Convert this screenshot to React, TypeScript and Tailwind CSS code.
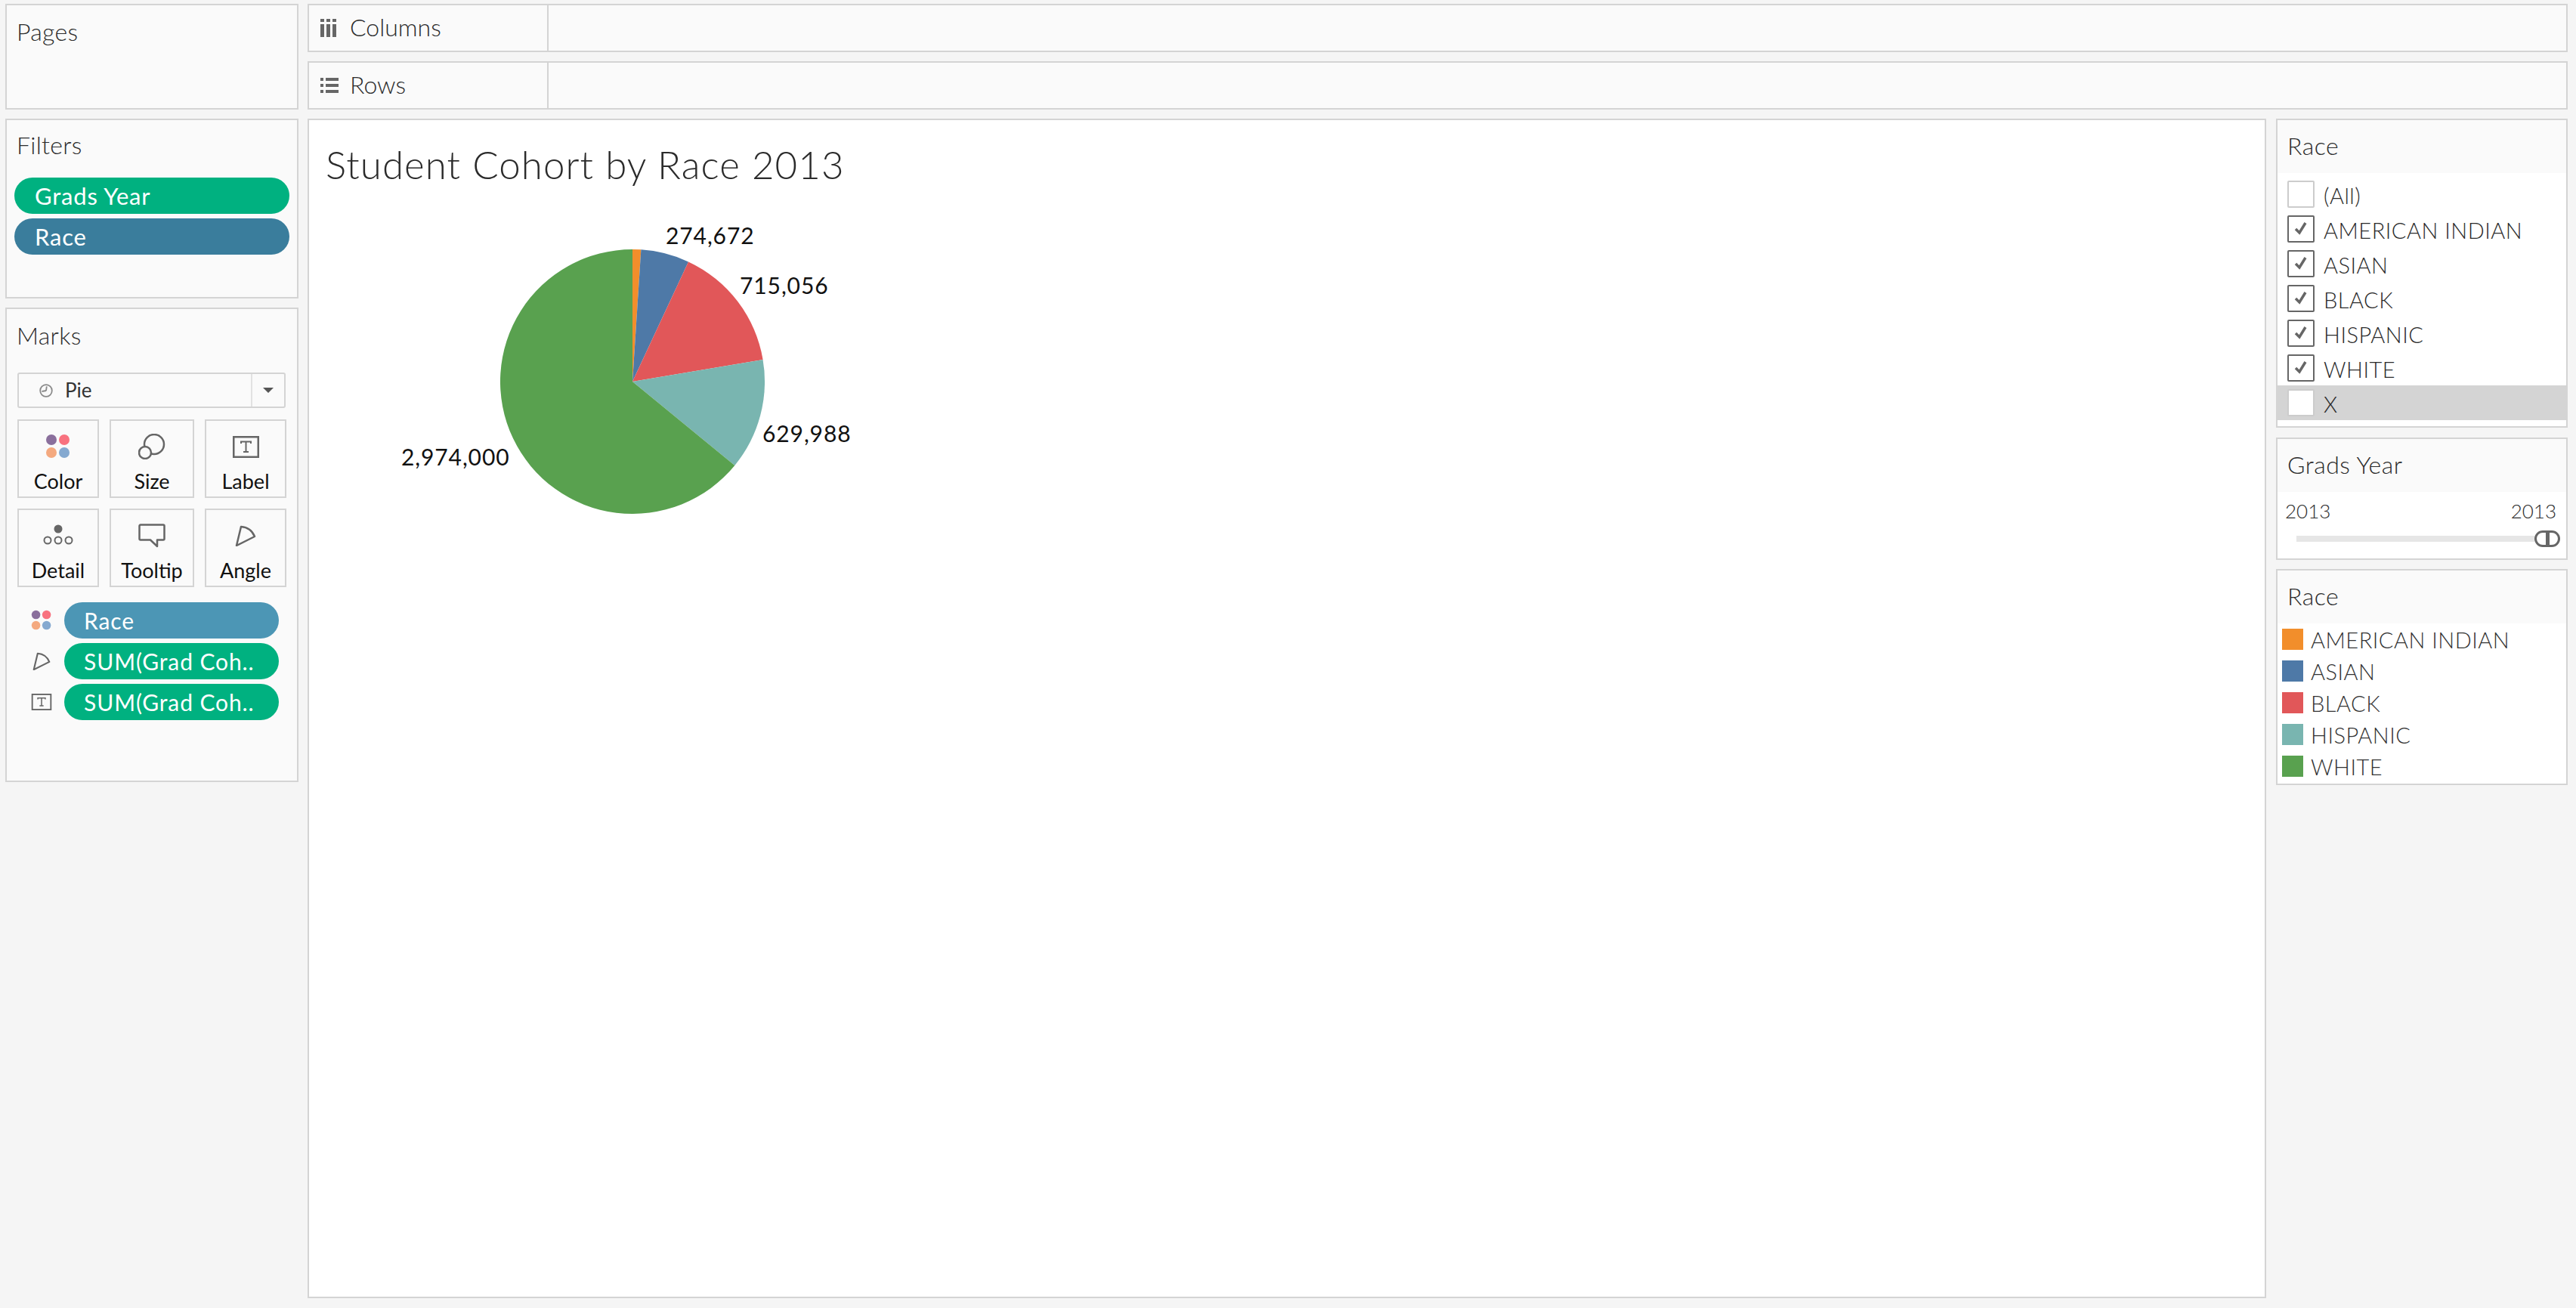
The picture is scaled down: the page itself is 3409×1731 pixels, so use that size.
import React from 'react';

const slices = [
  { name: 'AMERICAN INDIAN', value: 48000, color: '#f28e2b' },
  { name: 'ASIAN', value: 274672, color: '#4e79a7' },
  { name: 'BLACK', value: 715056, color: '#e15759' },
  { name: 'HISPANIC', value: 629988, color: '#79b5b0' },
  { name: 'WHITE', value: 2974000, color: '#59a14f' },
];

const raceOptions = [
  { label: '(All)', checked: false },
  { label: 'AMERICAN INDIAN', checked: true },
  { label: 'ASIAN', checked: true },
  { label: 'BLACK', checked: true },
  { label: 'HISPANIC', checked: true },
  { label: 'WHITE', checked: true },
  { label: 'X', checked: false, hover: true },
];

const pieLabels = [
  { text: '274,672', x: 881, y: 311 },
  { text: '715,056', x: 979, y: 377 },
  { text: '629,988', x: 1009, y: 573 },
  { text: '2,974,000', x: 531, y: 604 },
];

const ColorDots = ({ size = 34 }: { size?: number }) => (
  <svg width={size} height={size} viewBox="0 0 34 34">
    <circle cx="8" cy="8" r="7" fill="#8a6f9c" />
    <circle cx="25" cy="8" r="7" fill="#f8727f" />
    <circle cx="8" cy="25" r="7" fill="#f4a97f" />
    <circle cx="25" cy="25" r="7" fill="#85a9d0" />
  </svg>
);

const SizeIcon = () => (
  <svg width="36" height="34" viewBox="0 0 36 34" fill="none" stroke="#666" strokeWidth="2.5">
    <circle cx="21" cy="14" r="13" />
    <circle cx="9" cy="25" r="8" fill="#fafafa" />
  </svg>
);

const LabelIcon = ({ w = 35, h = 29 }: { w?: number; h?: number }) => (
  <svg width={w} height={h} viewBox="0 0 35 29" fill="none" stroke="#666">
    <rect x="1.25" y="1.25" width="32.5" height="26.5" strokeWidth="2.5" />
    <path d="M11 10V7.5H24V10M17.5 7.5V21M14 21H21" strokeWidth="2" />
  </svg>
);

const DetailIcon = () => (
  <svg width="40" height="32" viewBox="0 0 40 32" fill="none" stroke="#666" strokeWidth="2">
    <circle cx="20" cy="7" r="5.5" fill="#666" stroke="none" />
    <circle cx="6" cy="22" r="4.5" />
    <circle cx="20" cy="22" r="4.5" />
    <circle cx="34" cy="22" r="4.5" />
  </svg>
);

const TooltipIcon = () => (
  <svg width="36" height="32" viewBox="0 0 36 32" fill="none" stroke="#666" strokeWidth="2.5" strokeLinejoin="round">
    <path d="M3 1.5H33a1.5 1.5 0 0 1 1.5 1.5V20a1.5 1.5 0 0 1-1.5 1.5H25V30L16 21.5H3A1.5 1.5 0 0 1 1.5 20V3A1.5 1.5 0 0 1 3 1.5Z" />
  </svg>
);

const AngleIcon = ({ size = 28 }: { size?: number }) => (
  <svg width={size} height={size} viewBox="0 0 28 28" fill="none" stroke="#666" strokeWidth="2.5" strokeLinejoin="round">
    <path d="M2 27L8 2Q21 3 26 15Z" />
  </svg>
);

const PieIcon = () => (
  <svg width="18" height="18" viewBox="0 0 18 18" fill="none" stroke="#8a8a8a" strokeWidth="1.8">
    <circle cx="9" cy="9" r="7.8" />
    <path d="M9 9L9.8 3.4M9 9L3.4 10" />
  </svg>
);

const ColumnsIcon = () => (
  <svg width="21" height="24" viewBox="0 0 21 24" fill="#666">
    <rect x="0" y="0" width="5" height="4" />
    <rect x="8" y="0" width="5" height="4" />
    <rect x="16" y="0" width="5" height="4" />
    <rect x="0" y="7" width="5" height="17" />
    <rect x="8" y="7" width="5" height="17" />
    <rect x="16" y="7" width="5" height="17" />
  </svg>
);

const RowsIcon = () => (
  <svg width="24" height="20" viewBox="0 0 24 20" fill="#666">
    <rect x="0" y="0" width="4" height="4" />
    <rect x="7" y="0" width="17" height="4" />
    <rect x="0" y="8" width="4" height="4" />
    <rect x="7" y="8" width="17" height="4" />
    <rect x="0" y="16" width="4" height="4" />
    <rect x="7" y="16" width="17" height="4" />
  </svg>
);

const PieChart = () => {
  const total = slices.reduce((sum, s) => sum + s.value, 0);
  const cx = 837;
  const cy = 505;
  const r = 175;
  let acc = 0;
  return (
    <svg className="ml-[91px] mt-[12px] block" width="680" height="440" viewBox="500 260 680 440">
      {slices.map((s) => {
        const a0 = (acc / total) * Math.PI * 2;
        acc += s.value;
        const a1 = (acc / total) * Math.PI * 2;
        const large = a1 - a0 > Math.PI ? 1 : 0;
        const d = `M${cx} ${cy}L${cx + r * Math.sin(a0)} ${cy - r * Math.cos(a0)}A${r} ${r} 0 ${large} 1 ${cx + r * Math.sin(a1)} ${cy - r * Math.cos(a1)}Z`;
        return <path key={s.name} d={d} fill={s.color} />;
      })}
      {pieLabels.map((l) => (
        <text key={l.text} x={l.x} y={l.y} dominantBaseline="central" fontSize="30" fill="#111" letterSpacing="0.9" className="[font-family:Lato,sans-serif]">
          {l.text}
        </text>
      ))}
    </svg>
  );
};

const MarkButton = ({ label, icon }: { label: string; icon: React.ReactNode }) => (
  <div className="flex h-[104px] flex-col items-center border-2 border-[#d4d4d4]">
    <div className="flex h-[64px] items-center justify-center pt-[4px]">{icon}</div>
    <div className="text-[27px] leading-[32px] text-[#111]">{label}</div>
  </div>
);

const ShelfPill = ({ icon, label, color }: { icon: React.ReactNode; label: string; color: string }) => (
  <div className="flex h-[48px] items-center">
    <div className="flex w-[62px] justify-center pl-[6px]">{icon}</div>
    <div className={`ml-[2px] flex h-[48px] w-[284px] items-center rounded-full pl-[26px] text-[30px] tracking-[0.9px] text-white ${color}`}>{label}</div>
  </div>
);

const Shelf = ({ icon, label }: { icon: React.ReactNode; label: string }) => (
  <div className="flex h-[64px] border-2 border-[#d4d4d4] bg-[#fafafa]">
    <div className="flex w-[317px] items-center border-r-2 border-[#d4d4d4] pb-[2px] pl-[15px] text-[32px] font-light text-[#2b2b2b]">
      <div className="flex w-[39px] items-center pt-[2px]">{icon}</div>
      {label}
    </div>
  </div>
);

const PanelTitle = ({ children, className = 'pt-[15px]' }: { children: React.ReactNode; className?: string }) => (
  <div className={`pl-[13px] text-[32px] leading-[36px] font-light tracking-[0.3px] text-[#2b2b2b] ${className}`}>{children}</div>
);

const CardHeader = ({ children }: { children: React.ReactNode }) => (
  <div className="flex h-[70px] items-center bg-[#fafafa] pb-[2px] pl-[13px] text-[32px] font-light tracking-[0.5px] text-[#2b2b2b]">{children}</div>
);

const Checkbox = ({ checked }: { checked: boolean }) => (
  <div className={`flex h-[36px] w-[36px] items-center justify-center rounded-[2px] border-2 bg-white ${checked ? 'border-[#666]' : 'border-[#ccc]'}`}>
    {checked && (
      <svg width="18" height="18" viewBox="0 0 18 18" fill="none" stroke="#666" strokeWidth="3.5">
        <path d="M2 9L7 14L15 1" />
      </svg>
    )}
  </div>
);

export default function App() {
  return (
    <div className="flex h-[1731px] w-[3409px] gap-[12px] overflow-hidden bg-[#f5f5f5] pl-[7px] pr-[11px] pt-[5px] [font-family:Lato,sans-serif]">
      {/* left cards */}
      <div className="flex w-[388px] shrink-0 flex-col gap-[12px]">
        <div className="h-[140px] border-2 border-[#d4d4d4] bg-[#fafafa]">
          <PanelTitle className="pt-[17px]">Pages</PanelTitle>
        </div>
        <div className="h-[238px] border-2 border-[#d4d4d4] bg-[#fafafa]">
          <PanelTitle>Filters</PanelTitle>
          <div className="mt-[25px] flex flex-col gap-[6px] px-[10px]">
            <div className="flex h-[48px] items-center rounded-full bg-[#00b180] pl-[27px] text-[31px] tracking-[0.8px] text-white">Grads Year</div>
            <div className="flex h-[48px] items-center rounded-full bg-[#3a7d9c] pl-[27px] text-[31px] tracking-[0.8px] text-white">Race</div>
          </div>
        </div>
        <div className="h-[628px] border-2 border-[#d4d4d4] bg-[#fafafa]">
          <PanelTitle className="pt-[17px]">Marks</PanelTitle>
          <div className="ml-[14px] mt-[31px] flex h-[47px] w-[355px] items-center rounded-[3px] border-2 border-[#d4d4d4]">
            <div className="flex w-[309px] items-center border-r-2 border-[#e2e2e2] pl-[27px] text-[26px] leading-[43px] text-[#333]">
              <PieIcon />
              <span className="ml-[16px]">Pie</span>
            </div>
            <div className="flex flex-1 justify-center">
              <div className="h-0 w-0 border-x-[7px] border-t-[7px] border-x-transparent border-t-[#555]" />
            </div>
          </div>
          <div className="ml-[14px] mt-[15px] grid w-[356px] grid-cols-[108px_112px_108px] gap-x-[14px] gap-y-[14px]">
            <MarkButton label="Color" icon={<ColorDots />} />
            <MarkButton label="Size" icon={<SizeIcon />} />
            <MarkButton label="Label" icon={<LabelIcon />} />
            <MarkButton label="Detail" icon={<DetailIcon />} />
            <MarkButton label="Tooltip" icon={<TooltipIcon />} />
            <MarkButton label="Angle" icon={<AngleIcon />} />
          </div>
          <div className="mt-[20px] flex flex-col gap-[6px] pl-[12px]">
            <ShelfPill icon={<ColorDots size={28} />} label="Race" color="bg-[#4c96b5]" />
            <ShelfPill icon={<AngleIcon size={24} />} label="SUM(Grad Coh.." color="bg-[#00b180]" />
            <ShelfPill icon={<LabelIcon w={28} h={22} />} label="SUM(Grad Coh.." color="bg-[#00b180]" />
          </div>
        </div>
      </div>

      {/* shelves + view + right cards */}
      <div className="flex min-w-0 flex-1 flex-col gap-[12px]">
        <Shelf icon={<ColumnsIcon />} label="Columns" />
        <Shelf icon={<RowsIcon />} label="Rows" />
        <div className="flex gap-[13px]">
          <div className="h-[1561px] w-[2592px] shrink-0 border-2 border-[#d4d4d4] bg-white">
            <div className="pl-[22px] pt-[29px] text-[51px] leading-[60px] font-light tracking-[1.1px] text-[#2b2b2b]">Student Cohort by Race 2013</div>
            <PieChart />
          </div>
          <div className="flex min-w-0 flex-1 flex-col gap-[12px]">
            <div className="mb-[1px] h-[409px] border-2 border-[#d4d4d4] bg-white">
              <CardHeader>Race</CardHeader>
              <div className="pt-[5px]">
                {raceOptions.map((o) => (
                  <div key={o.label} className={`flex h-[46px] items-center gap-[12px] pl-[13px] text-[29px] font-light tracking-[0.5px] text-[#2b2b2b] ${o.hover ? 'bg-[#d4d4d4]' : ''}`}>
                    <Checkbox checked={o.checked} />
                    <span className="pt-[3px]">{o.label}</span>
                  </div>
                ))}
              </div>
            </div>
            <div className="h-[162px] border-2 border-[#d4d4d4] bg-white">
              <CardHeader>Grads Year</CardHeader>
              <div className="flex justify-between pl-[10px] pr-[13px] pt-[10px] text-[26px] leading-[30px] font-light text-[#2b2b2b]">
                <span>2013</span>
                <span>2013</span>
              </div>
              <div className="ml-[25px] mr-[8px] mt-[11px] flex h-[22px] items-center">
                <div className="h-[8px] flex-1 bg-[#e6e6e6]" />
                <div className="flex h-[22px] w-[34px] justify-center rounded-full border-[3px] border-[#666] bg-white">
                  <div className="h-full w-[5px] bg-[#666]" />
                </div>
              </div>
            </div>
            <div className="h-[286px] border-2 border-[#d4d4d4] bg-white">
              <CardHeader>Race</CardHeader>
              {slices.map((s) => (
                <div key={s.name} className="flex h-[42px] items-center gap-[10px] pl-[6px] text-[29px] font-light tracking-[0.5px] text-[#333]">
                  <div className="h-[28px] w-[28px]" style={{ backgroundColor: s.color }} />
                  <span className="pt-[2px]">{s.name}</span>
                </div>
              ))}
            </div>
          </div>
        </div>
      </div>
    </div>
  );
}
